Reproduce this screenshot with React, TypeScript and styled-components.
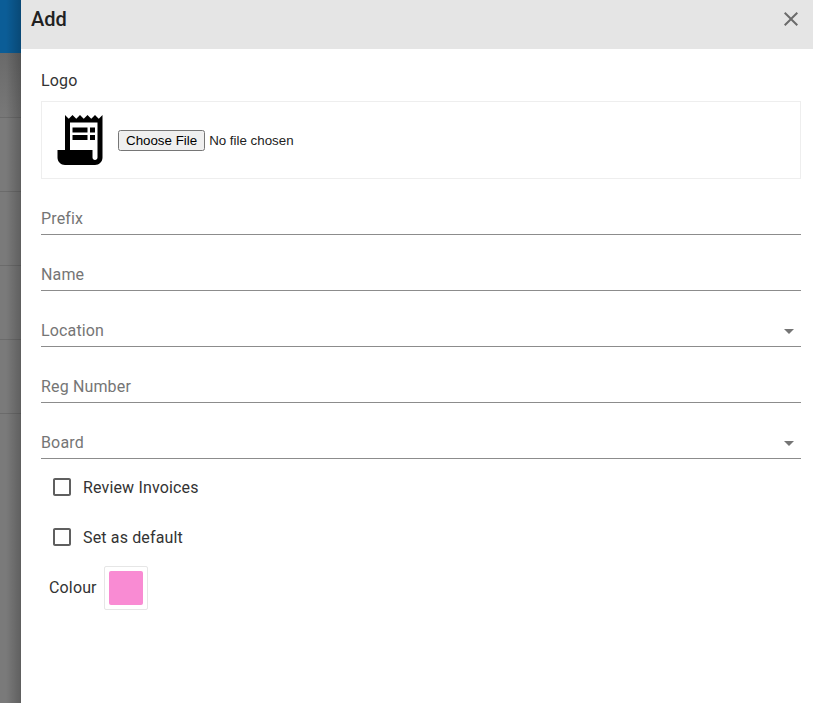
import React from "react";
import styled, { createGlobalStyle } from "styled-components";

const Global = createGlobalStyle`
  html, body { margin: 0; padding: 0; height: 100%; background: #fff; overflow: hidden; }
  #root { height: 100%; }
  * { box-sizing: border-box; }
`;

const Page = styled.div`
  display: flex;
  width: 813px;
  height: 703px;
  font-family: Roboto, "Liberation Sans", sans-serif;
  letter-spacing: 0.15px;
`;

const Backdrop = styled.div`
  position: relative;
  width: 21px;
  flex: none;
  background: #7a7a7a;
  overflow: hidden;
  &::after {
    content: "";
    position: absolute;
    inset: 0;
    background: linear-gradient(to right, rgba(0, 0, 0, 0) 0, rgba(0, 0, 0, 0) 6px, rgba(0, 0, 0, 0.22) 21px);
  }
`;

const BackdropBar = styled.div`
  height: 53px;
  background: #0b5d97;
`;

const BackdropShade = styled.div`
  height: 65px;
  background: linear-gradient(to bottom, #6a6a6a, #787878);
  border-bottom: 1px solid #6b6b6b;
`;

const BackdropRow = styled.div`
  height: 74px;
  border-bottom: 1px solid #6b6b6b;
`;

const Drawer = styled.div`
  flex: 1;
  min-width: 0;
  display: flex;
  flex-direction: column;
  background: #fff;
`;

const Header = styled.header`
  height: 49px;
  flex: none;
  display: flex;
  align-items: flex-start;
  justify-content: space-between;
  padding: 7px 10px 0 10px;
  background: #e5e5e5;
`;

const Title = styled.h2`
  margin: 0;
  font-size: 20px;
  line-height: 24px;
  font-weight: 500;
  letter-spacing: 0;
  color: #212121;
`;

const CloseButton = styled.button`
  width: 24px;
  height: 24px;
  padding: 0;
  border: 0;
  background: none;
  color: #6b6b6b;
  display: flex;
  align-items: center;
  justify-content: center;
`;

const Body = styled.div`
  display: flex;
  flex-direction: column;
  padding: 21px 12px 0 20px;
`;

const SectionLabel = styled.div`
  font-size: 16px;
  line-height: 21px;
  color: #333;
  margin-bottom: 10px;
`;

const LogoBox = styled.div`
  height: 78px;
  border: 1px solid #eee;
  padding: 8px;
  display: flex;
  align-items: center;
  gap: 8px;
`;

const LogoIcon = styled.svg`
  width: 60px;
  height: 60px;
  flex: none;
  fill: #000;
`;

const FileInput = styled.input`
  font-family: "Liberation Sans", Arial, sans-serif;
  font-size: 13.333px;
  letter-spacing: 0;
  color: #222;
`;

const Field = styled.div`
  height: 56px;
  display: flex;
  align-items: flex-end;
  justify-content: space-between;
  border-bottom: 1px solid #8c8c8c;
  padding-bottom: 5px;
  font-size: 16px;
  line-height: 21px;
  color: #757575;
`;

const Arrow = styled.span`
  width: 0;
  height: 0;
  margin: 0 7px 7px 0;
  border-left: 5px solid transparent;
  border-right: 5px solid transparent;
  border-top: 5px solid #757575;
`;

const CheckRow = styled.label`
  height: 50px;
  display: flex;
  align-items: center;
  gap: 9px;
  padding-left: 9px;
  font-size: 16px;
  color: #333;
`;

const CheckIcon = styled.svg`
  width: 24px;
  height: 24px;
  fill: #5f5f5f;
`;

const Checks = styled.div`
  padding-top: 3px;
`;

const ColourRow = styled.div`
  display: flex;
  align-items: center;
  gap: 7px;
  padding-left: 8px;
  margin-top: 4px;
  font-size: 16px;
  color: #333;
`;

const ColourLabel = styled.span`
  margin-bottom: 2px;
`;

const SwatchFrame = styled.div`
  width: 44px;
  height: 44px;
  padding: 4px;
  border: 1px solid #e6e6e6;
  border-radius: 2px;
`;

const Swatch = styled.div<{ $colour: string }>`
  width: 100%;
  height: 100%;
  border-radius: 2px;
  background: ${(p) => p.$colour};
`;

const Checkbox = ({ label }: { label: string }) => (
  <CheckRow>
    <CheckIcon viewBox="0 0 24 24">
      <path d="M19 5v14H5V5h14m0-2H5c-1.1 0-2 .9-2 2v14c0 1.1.9 2 2 2h14c1.1 0 2-.9 2-2V5c0-1.1-.9-2-2-2z" />
    </CheckIcon>
    {label}
  </CheckRow>
);

export default function App() {
  return (
    <Page>
      <Global />
      <Backdrop>
        <BackdropBar />
        <BackdropShade />
        <BackdropRow />
        <BackdropRow />
        <BackdropRow />
        <BackdropRow />
      </Backdrop>
      <Drawer>
        <Header>
          <Title>Add</Title>
          <CloseButton aria-label="Close">
            <svg width="24" height="24" viewBox="0 0 24 24" fill="currentColor">
              <path d="M19 6.41 17.59 5 12 10.59 6.41 5 5 6.41 10.59 12 5 17.59 6.41 19 12 13.41 17.59 19 19 17.59 13.41 12z" />
            </svg>
          </CloseButton>
        </Header>
        <Body>
          <SectionLabel>Logo</SectionLabel>
          <LogoBox>
            <LogoIcon viewBox="0 0 24 24">
              <path
                fillRule="evenodd"
                d="M19.5 3.5 18 2l-1.5 1.5L15 2l-1.5 1.5L12 2l-1.5 1.5L9 2 7.5 3.5 6 2v14H3v3c0 1.66 1.34 3 3 3h12c1.66 0 3-1.34 3-3V2l-1.5 1.5zM19 19c0 .55-.45 1-1 1s-1-.45-1-1v-3H8V5h11v14z"
              />
              <path d="M9 7h6v2H9zm7 0h2v2h-2zM9 10h6v2H9zm7 0h2v2h-2z" />
            </LogoIcon>
            <FileInput type="file" />
          </LogoBox>
          <Field>Prefix</Field>
          <Field>Name</Field>
          <Field>
            Location
            <Arrow />
          </Field>
          <Field>Reg Number</Field>
          <Field>
            Board
            <Arrow />
          </Field>
          <Checks>
            <Checkbox label="Review Invoices" />
            <Checkbox label="Set as default" />
          </Checks>
          <ColourRow>
            <ColourLabel>Colour</ColourLabel>
            <SwatchFrame>
              <Swatch $colour="#f98bd3" />
            </SwatchFrame>
          </ColourRow>
        </Body>
      </Drawer>
    </Page>
  );
}
